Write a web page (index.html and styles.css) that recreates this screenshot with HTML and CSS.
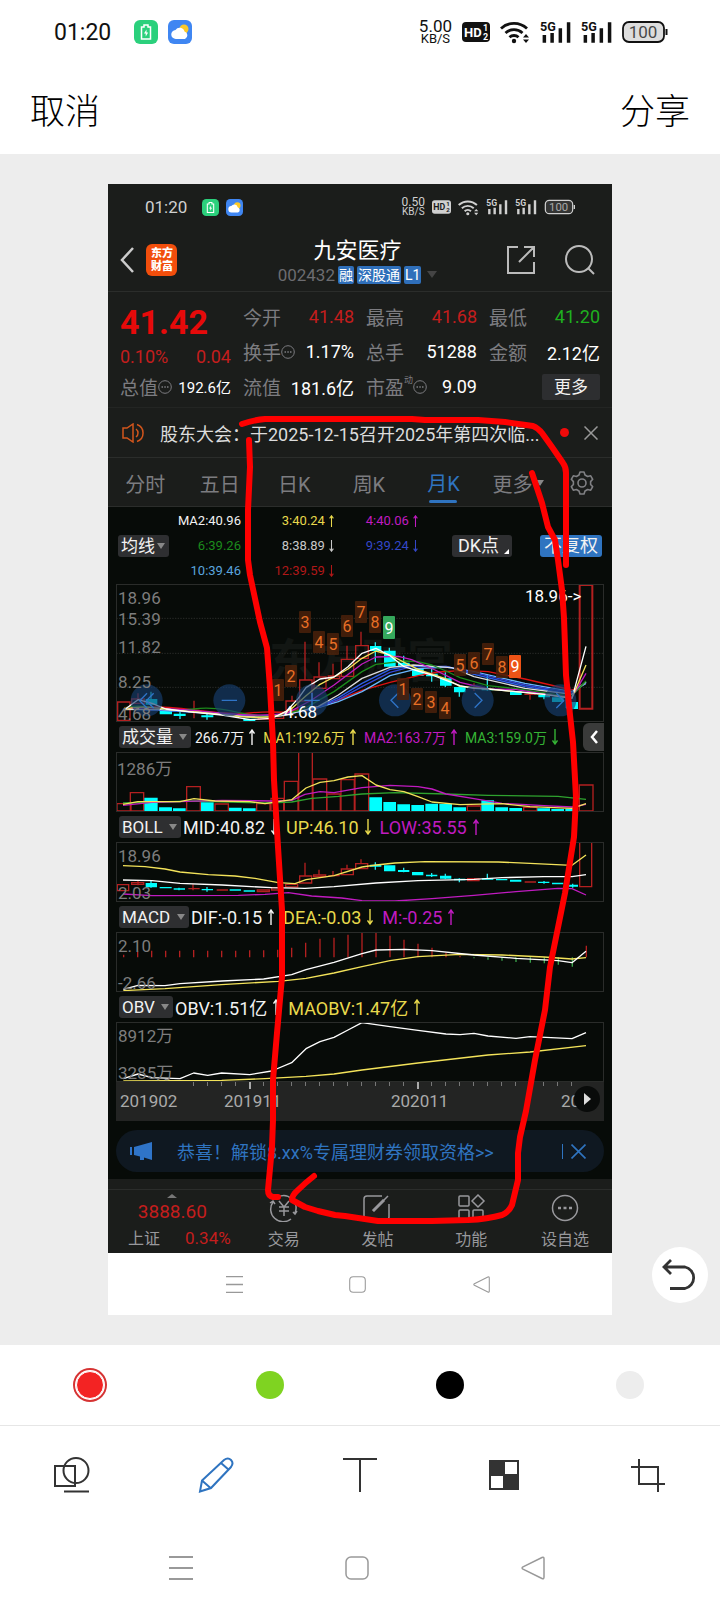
FILE: index.html
```html
<!DOCTYPE html>
<html lang="zh-CN">
<head>
    <meta charset="UTF-8">
    <meta name="viewport" content="width=device-width, initial-scale=1.0">
    <title>涂鸦</title>
    <link rel="stylesheet" href="styles.css">
</head>
<body>
    <!-- shared icons -->
    <svg class="sprite" aria-hidden="true">
        <symbol id="i-power" viewBox="0 0 24 24">
            <rect width="24" height="24" rx="6" fill="#2bd07c"/>
            <path d="M10 5h4v2h2.500v12h-9V7H10z" fill="none" stroke="#fff" stroke-width="1.500"/>
            <path d="M12.500 9.500l-2.500 4h1.700v3l2.500-4h-1.700z" fill="#fff"/>
        </symbol>
        <symbol id="i-weather" viewBox="0 0 24 24">
            <rect width="24" height="24" rx="6" fill="#3f86f2"/>
            <circle cx="16" cy="9" r="4.500" fill="#fbc928"/>
            <path d="M8 19a4.500 4.500 0 0 1-.5-9 5 5 0 0 1 9 1.500A4 4 0 0 1 17 19z" fill="#fff"/>
        </symbol>
        <symbol id="i-hd" viewBox="0 0 28 20">
            <rect width="28" height="20" rx="4" fill="currentColor"/>
            <g class="hd-text">
                <text x="2" y="15" font-size="13">HD</text>
                <text x="21" y="9" font-size="9">1</text>
                <text x="21" y="18" font-size="9">2</text>
            </g>
        </symbol>
        <symbol id="i-wifi" viewBox="0 0 30 24">
            <g fill="none" stroke="currentColor" stroke-width="2.800">
                <path d="M1 8.500a19 19 0 0 1 26 0"/>
                <path d="M5.500 13a12.500 12.500 0 0 1 17 0"/>
                <path d="M9.500 17.300a6.500 6.500 0 0 1 9 0"/>
            </g>
            <circle cx="14" cy="21" r="2.200" fill="currentColor"/>
            <path d="M23 17.500l3-3.500 3 3.500zM23 19.500h6l-3 3.500z" fill="currentColor"/>
        </symbol>
        <symbol id="i-5g" viewBox="0 0 32 24">
            <text x="0" y="11" font-size="13" font-weight="700" fill="currentColor">5G</text>
            <path d="M4.500 23v-8M12.500 23v-10M21 23V8M29.500 23V2" stroke="currentColor" stroke-width="3.600"/>
        </symbol>
        <symbol id="i-battery" viewBox="0 0 46 24">
            <rect x="1" y="2" width="41" height="20" rx="6" fill="currentColor" fill-opacity=".14" stroke="currentColor" stroke-width="1.800"/>
            <path d="M44.500 9v6" stroke="currentColor" stroke-width="2"/>
            <text x="21" y="18" font-size="17" text-anchor="middle" fill="currentColor" opacity=".75">100</text>
        </symbol>
        <symbol id="i-menu" viewBox="0 0 24 24">
            <path d="M0 1h24M0 12h24M0 23h24" stroke="currentColor" stroke-width="1.800"/>
        </symbol>
        <symbol id="i-home" viewBox="0 0 24 24">
            <rect x="1" y="1" width="22" height="22" rx="5" fill="none" stroke="currentColor" stroke-width="1.500"/>
        </symbol>
        <symbol id="i-back" viewBox="0 0 24 24">
            <path d="M21 1.500Q23 .5 23 3v18q0 2.500-2 1.500L2 13.200q-1.800-1.200 0-2.400z" fill="none" stroke="currentColor" stroke-width="1.500"/>
        </symbol>
        <symbol id="i-up" viewBox="0 0 6 16">
            <path d="M3 16V1M.500 4.500L3 1l2.500 3.500" fill="none" stroke="currentColor" stroke-width="1.400"/>
        </symbol>
        <symbol id="i-down" viewBox="0 0 6 16">
            <path d="M3 0v15M.500 11.500L3 15l2.500-3.500" fill="none" stroke="currentColor" stroke-width="1.400"/>
        </symbol>
        <symbol id="i-close" viewBox="0 0 14 14">
            <path d="M.500.500l13 13M13.500.500l-13 13" stroke="currentColor" stroke-width="1.500"/>
        </symbol>
        <symbol id="i-info" viewBox="0 0 14 14">
            <circle cx="7" cy="7" r="6.300" fill="none" stroke="currentColor"/>
            <path d="M3.500 7h1.500M6.300 7h1.500M9 7h1.500" stroke="currentColor" stroke-width="1.500"/>
        </symbol>
    </svg>

    <header class="top">
        <div class="status">
            <time>01:20</time>
            <svg class="app"><use href="#i-power"/></svg>
            <svg class="app"><use href="#i-weather"/></svg>
            <div class="speed"><b>5.00</b><span>KB/S</span></div>
            <svg class="hd"><use href="#i-hd"/></svg>
            <svg class="wifi"><use href="#i-wifi"/></svg>
            <svg class="sim"><use href="#i-5g"/></svg>
            <svg class="sim"><use href="#i-5g"/></svg>
            <svg class="battery"><use href="#i-battery"/></svg>
        </div>
        <div class="actions">
            <button type="button">取消</button>
            <button type="button">分享</button>
        </div>
    </header>

    <main class="stage">
        <div class="shot">
            <div class="status status-small">
                <time>01:20</time>
                <svg class="app"><use href="#i-power"/></svg>
                <svg class="app"><use href="#i-weather"/></svg>
                <div class="speed"><b>0.50</b><span>KB/S</span></div>
                <svg class="hd"><use href="#i-hd"/></svg>
                <svg class="wifi"><use href="#i-wifi"/></svg>
                <svg class="sim"><use href="#i-5g"/></svg>
                <svg class="sim"><use href="#i-5g"/></svg>
                <svg class="battery"><use href="#i-battery"/></svg>
            </div>

            <div class="stock-head">
                <div class="side">
                    <button type="button" aria-label="返回">
                        <svg width="14" height="26" viewBox="0 0 14 26"><path d="M13 1L2 13l11 12" fill="none" stroke="#ccc" stroke-width="2.500"/></svg>
                    </button>
                    <span class="logo">东方<br>财富</span>
                </div>
                <div class="stock">
                    <h1>九安医疗</h1>
                    <div class="code">
                        <span>002432</span>
                        <i>融</i><i>深股通</i><i>L1</i>
                        <svg width="10" height="7" viewBox="0 0 10 7"><path d="M0 0h10L5 7z" fill="#444"/></svg>
                    </div>
                </div>
                <div class="side side-right">
                    <button type="button" aria-label="分享">
                        <svg width="28" height="28" viewBox="0 0 28 28" fill="none" stroke="#bbb" stroke-width="2"><path d="M11 1H1v26h26V16M12 16L26 2M17 1h10v10"/></svg>
                    </button>
                    <button type="button" aria-label="搜索">
                        <svg width="30" height="30" viewBox="0 0 30 30" fill="none" stroke="#bbb" stroke-width="2"><circle cx="14" cy="14" r="13"/><path d="M23 23l6 6"/></svg>
                    </button>
                </div>
            </div>

            <section class="quote">
                <div class="last">
                    <strong>41.42</strong>
                    <p class="change"><span>0.10%</span><span>0.04</span></p>
                    <p class="cell total"><span>总值<svg class="info"><use href="#i-info"/></svg></span><b>192.6亿</b></p>
                </div>
                <p class="cell"><span>今开</span><b class="up">41.48</b></p>
                <p class="cell"><span>最高</span><b class="up">41.68</b></p>
                <p class="cell"><span>最低</span><b class="down">41.20</b></p>
                <p class="cell"><span>换手<svg class="info"><use href="#i-info"/></svg></span><b>1.17%</b></p>
                <p class="cell"><span>总手</span><b>51288</b></p>
                <p class="cell"><span>金额</span><b>2.12亿</b></p>
                <p class="cell"><span>流值</span><b>181.6亿</b></p>
                <p class="cell"><span>市盈<sup>动</sup><svg class="info"><use href="#i-info"/></svg></span><b>9.09</b></p>
                <button type="button" class="more">更多</button>
            </section>

            <div class="notice">
                <svg width="24" height="20" viewBox="0 0 24 20" fill="none" stroke="#d2551c" stroke-width="1.500"><path d="M1 5h4l6-4v18l-6-4H1zM14 6a5 5 0 0 1 0 8M15 1.500a9 9 0 0 1 0 17"/></svg>
                <p>股东大会：于2025-12-15召开2025年第四次临...</p>
                <span class="dot"></span>
                <button type="button" aria-label="关闭"><svg width="14" height="14"><use href="#i-close"/></svg></button>
            </div>

            <nav class="tabs">
                <button type="button">分时</button>
                <button type="button">五日</button>
                <button type="button">日K</button>
                <button type="button">周K</button>
                <button type="button" class="active">月K</button>
                <button type="button" class="drop">更多</button>
                <button type="button" class="gear" aria-label="设置">
                    <svg width="26" height="26" viewBox="0 0 26 26" fill="none" stroke="#808084" stroke-width="1.600" stroke-linejoin="round"><path d="M11 2h4l1 3 2.600 1.500 3.100-.7 2 3.500-2.100 2.300v2.800l2.100 2.300-2 3.500-3.100-.7L16 21l-1 3h-4l-1-3-2.600-1.500-3.100.7-2-3.500 2.100-2.300v-2.800L2.300 9.300l2-3.500 3.100.7L10 5z"/><circle cx="13" cy="13" r="4"/></svg>
                </button>
            </nav>

            <div class="charts">
                <div class="averages">
                    <label class="picker"><select aria-label="均线"><option>均线</option></select></label>
                    <ul>
                        <li>MA2:40.96</li>
                        <li class="yellow">3:40.24<svg><use href="#i-up"/></svg></li>
                        <li class="purple">4:40.06<svg><use href="#i-up"/></svg></li>
                        <li class="green">6:39.26</li>
                        <li class="grey">8:38.89<svg><use href="#i-down"/></svg></li>
                        <li class="blue">9:39.24<svg><use href="#i-down"/></svg></li>
                        <li class="sky">10:39.46</li>
                        <li class="red">12:39.59<svg><use href="#i-down"/></svg></li>
                    </ul>
                    <button type="button" class="dk">DK点</button>
                    <button type="button" class="adjust">不复权</button>
                </div>

                <!-- monthly candles -->
                <svg class="chart" viewBox="0 0 488 138">
                    <text class="mark" x="153" y="93">东方财富</text>
                    <svg width="488" height="138" viewBox="33 27 1464 414">
                        <path class="grid" d="M34 130H1497M34 235H1497M34 337H1497"/>
                        <g class="candle-up">
                            <path d="M38 381h37v55H38zM80 372h38v13H80zM99 355v17M267 377v53M250 411h34M335 415h34M460 422h36v10h-36zM502 412h34v18h-34zM543 378h36v27h-36zM561 362v16M584 315h37v63h-37zM600 200v115M627 306h36v34h-36zM642 262v44M670 303h34v8h-34zM684 266v37M709 253h37v51h-37zM726 212v41M752 212h38v38h-38zM768 170v42M1107 325v23M1090 338h34M1258 358h34M1275 352v22"/>
                            <path class="last-candle" d="M1424 30h38v371h-38z"/>
                        </g>
                        <g class="candle-down">
                            <path d="M138 350v45M225 410v22M306 412v22M811 202v60M853 218v56M896 242v30M980 280v40M1021 292v44M1063 330v35M1147 297v50M1317 355v18"/>
                            <path class="body" d="M122 372h35v17h-35zM164 405h37v13h-37zM206 416h36v7h-36zM289 421h36v6h-36zM374 414h36v4h-36zM415 431h36v9h-36zM795 213h34v15h-34zM837 227h35v48h-35zM879 263h35v9h-35zM921 281h35v22h-35zM963 296h35v8h-35zM1005 310h35v22h-35zM1047 336h35v16h-35zM1130 342h35v4h-35zM1215 349h35v11h-35zM1300 360h35v7h-35zM1341 367h35v14h-35zM1384 381h35v21h-35z"/>
                        </g>
                        <g class="lines">
                            <path stroke="#d11" d="M57 398Q150 390 267 405T435 414 545 412L620 402 687 380 771 346 855 322 940 302 1000 291 1080 286 1149 290 1260 312 1401 345 1443 325"/>
                            <path stroke="#6ab7ff" d="M57 402Q200 405 351 416T545 418L640 398 700 380 771 350 855 302 939 281 1023 276 1107 290 1260 325 1401 350 1443 325"/>
                            <path stroke="#3447d8" d="M57 403Q200 402 351 415T545 418L640 397 700 374 771 335 855 292 920 275 1023 274 1107 293 1260 330 1401 353 1443 322"/>
                            <path stroke="#2f5fe8" d="M57 401Q200 406 351 417T560 415L640 396 700 368 771 325 855 283 925 272 1040 278 1107 298 1260 335 1401 357 1443 320"/>
                            <path stroke="#ddd" d="M57 404Q200 400 351 418T560 415L640 394 700 360 771 310 855 277 925 270 1040 278 1107 305 1260 340 1401 358 1443 320"/>
                            <path stroke="#1c8a1c" d="M57 400C110 380 180 415 267 402S420 428 500 424L590 405 687 350 771 290 813 268 900 258 939 260 981 270 1023 288 1065 308 1149 332 1233 341 1350 358 1401 362 1443 318"/>
                            <path stroke="#c01bc0" d="M57 402C110 395 200 400 300 410S470 425 545 415L620 375 687 330 771 267 813 246 880 244 920 254 990 285 1065 322 1149 342 1233 344 1350 362 1401 366 1443 295"/>
                            <path stroke="#f3e35a" d="M57 405C110 385 180 405 267 411S440 436 520 422L561 400 603 362 645 328 687 306 729 282 771 250 813 228 855 240 939 283 1023 312 1065 334 1149 342 1317 358 1401 368 1443 270"/>
                            <path stroke="#fff" d="M57 405L99 374 141 385 183 402 267 412 351 420 435 434 500 430 545 408 580 370 603 338 645 312 687 306 729 275 771 235 813 220 855 242 897 275 939 288 981 300 1023 316 1065 332 1107 340 1150 342 1233 350 1317 358 1401 370 1443 214"/>
                        </g>
                        <g class="pads">
                            <circle cx="125" cy="376" r="48"/><circle cx="373" cy="376" r="48"/><circle cx="621" cy="376" r="48"/>
                            <circle cx="870" cy="376" r="48"/><circle cx="1118" cy="376" r="48"/><circle cx="1366" cy="376" r="48"/>
                            <path d="M126 355l-22 22 22 22M146 355l-22 22 22 22M350 376h46M598 376h46M621 353v46M880 354l-22 22 22 22M1109 354l22 22-22 22M1354 355l22 22-22 22M1384 355v44"/>
                        </g>
                    </svg>
                    <rect class="frame" x=".5" y=".5" width="487" height="137"/>
                    <g class="scale">
                        <text x="2" y="20">18.96</text>
                        <text x="2" y="41">15.39</text>
                        <text x="2" y="69">11.82</text>
                        <text x="2" y="104">8.25</text>
                        <text x="2" y="136">4.68</text>
                    </g>
                    <g class="tags">
                        <rect x="156" y="95" width="12" height="22" rx="1"/><rect x="169" y="81" width="12" height="22" rx="1"/>
                        <rect x="183" y="27" width="12" height="22" rx="1"/><rect x="197" y="47" width="12" height="22" rx="1"/>
                        <rect x="211" y="49" width="12" height="22" rx="1"/><rect x="225" y="31" width="12" height="22" rx="1"/>
                        <rect x="239" y="17" width="12" height="22" rx="1"/><rect x="253" y="27" width="12" height="22" rx="1"/>
                        <rect class="tag-green" x="267" y="32" width="12" height="23" rx="1"/>
                        <rect x="281" y="94" width="12" height="22" rx="1"/><rect x="295" y="104" width="12" height="22" rx="1"/>
                        <rect x="309" y="107" width="12" height="22" rx="1"/><rect x="323" y="113" width="12" height="22" rx="1"/>
                        <rect x="338" y="70" width="12" height="22" rx="1"/><rect x="352" y="68" width="12" height="22" rx="1"/>
                        <rect x="366" y="59" width="12" height="22" rx="1"/><rect x="380" y="72" width="12" height="22" rx="1"/>
                        <rect class="tag-hot" x="393" y="71" width="12" height="23" rx="1"/>
                        <text x="162" y="112">1</text><text x="175" y="98">2</text><text x="189" y="44">3</text>
                        <text x="203" y="64">4</text><text x="217" y="66">5</text><text x="231" y="48">6</text>
                        <text x="245" y="34">7</text><text x="259" y="44">8</text><text class="on" x="273" y="50">9</text>
                        <text x="287" y="111">1</text><text x="301" y="121">2</text><text x="315" y="124">3</text>
                        <text x="329" y="130">4</text><text x="344" y="87">5</text><text x="358" y="85">6</text>
                        <text x="372" y="76">7</text><text x="386" y="89">8</text><text class="on" x="399" y="88">9</text>
                    </g>
                    <g class="extreme">
                        <text x="409" y="18">18.96-&gt;</text>
                        <text x="168" y="134">4.68</text>
                    </g>
                </svg>

                <div class="legend legend-tight">
                    <label class="picker"><select aria-label="成交量"><option>成交量</option></select></label>
                    <span>266.7万<svg><use href="#i-up"/></svg></span>
                    <span class="yellow">MA1:192.6万<svg><use href="#i-up"/></svg></span>
                    <span class="purple">MA2:163.7万<svg><use href="#i-up"/></svg></span>
                    <span class="lime">MA3:159.0万<svg><use href="#i-down"/></svg></span>
                    <button type="button" class="fold" aria-label="收起">
                        <svg width="8" height="14" viewBox="0 0 8 14"><path d="M7 1L2 7l5 6" fill="none" stroke="#fff" stroke-width="2.500"/></svg>
                    </button>
                </div>
                <svg class="chart" viewBox="0 0 488 60">
                    <text class="scale" x="1" y="23">1286万</text>
                    <svg width="488" height="60" viewBox="33 65 1464 180">
                        <path class="candle-up" d="M36 242v-22h42v22zM76 242v-55h40v55zM245 242v-73h41v73zM330 242v-21h40v21zM455 242v-22h40v22zM498 242v-38h38v38zM538 242v-89h41v89zM581 242V60h41v182zM624 242v-96h41v96zM666 242v-51h40v51zM708 242v-94h40v94zM750 242V131h41v111zM1087 242v-15h40v15zM1256 242v-11h40v11zM1423 242v-78h41v78z"/>
                        <path class="body" d="M118 202h40v40h-40zM162 231h39v11h-39zM204 234h38v8h-38zM288 216h38v26h-38zM372 232h38v10h-38zM414 234h38v8h-38zM793 201h38v41h-38zM835 215h38v27h-38zM877 222h38v20h-38zM919 224h38v18h-38zM961 220h38v22h-38zM1003 221h38v21h-38zM1045 231h38v11h-38zM1129 210h38v32h-38zM1171 231h38v11h-38zM1213 233h38v9h-38zM1297 234h38v8h-38zM1339 236h38v6h-38zM1381 235h38v7h-38z"/>
                        <g class="lines">
                            <path stroke="#2fa32f" d="M54 218L267 212 480 218 560 215 620 204 700 198 771 191 870 187 1023 191 1149 195 1359 198 1443 207"/>
                            <path stroke="#c01bc0" d="M54 225L141 216 351 210 500 212 560 210 600 192 645 184 687 187 771 172 855 165 939 169 981 176 1023 191 1107 205 1191 219 1317 226 1401 230 1443 222"/>
                            <path stroke="#f3e35a" d="M54 222L99 214 225 214 267 205 330 212 435 214 480 220 560 208 603 173 645 156 687 151 729 140 771 136 813 164 855 178 897 184 939 199 981 215 1065 223 1191 220 1275 229 1401 234 1443 220"/>
                        </g>
                    </svg>
                    <rect class="frame" x=".5" y=".5" width="487" height="59"/>
                </svg>

                <div class="legend">
                    <label class="picker"><select aria-label="BOLL"><option>BOLL</option></select></label>
                    <span>MID:40.82<svg><use href="#i-down"/></svg></span>
                    <span class="yellow">UP:46.10<svg><use href="#i-down"/></svg></span>
                    <span class="purple">LOW:35.55<svg><use href="#i-up"/></svg></span>
                </div>
                <svg class="chart" viewBox="0 0 488 60">
                    <svg width="488" height="60" viewBox="33 335 1464 180">
                        <path class="candle-up" d="M37 463h34v18H37zM80 457h36v5H80zM99 450v15M250 475h34M264 462v18M335 479h34M457 479h36v5h-36zM500 472h34v7h-34zM542 462h36v8h-36zM584 437h36v21h-36zM600 397v40M626 434h36v5h-36zM642 418v16M670 436h34M684 422v14M709 416h36v17h-36zM726 403v13M752 400h36v15h-36zM768 387v13M1088 445h34v6h-34zM1259 455h34M1424 330h36v139h-36z"/>
                        <path class="candle-down" d="M138 452v20M222 472v8M306 470v14M811 396v22M896 412v14M980 428v12M1021 430v16M1063 444v12M1147 430v16M1317 452v8M1403 460v12"/>
                        <path class="body" d="M122 458h34v13h-34zM164 470h36v4h-36zM206 474h34v4h-34zM290 476h34v4h-34zM374 477h34v4h-34zM416 480h34v4h-34zM795 403h34v6h-34zM837 405h34v18h-34zM879 419h34v6h-34zM921 425h34v10h-34zM963 433h34v5h-34zM1005 436h34v9h-34zM1047 445h34v5h-34zM1131 444h34v4h-34zM1173 446h34v4h-34zM1215 448h34v6h-34zM1299 454h34v4h-34zM1341 457h34v5h-34zM1385 463h34v6h-34z"/>
                        <g class="lines">
                            <path stroke="#f3e35a" d="M54 406L120 409 180 416 225 425 310 433 390 437 450 444 520 457 570 460 603 448 687 436 771 410 813 404 870 398 960 394 1180 395 1275 399 1401 405 1443 374"/>
                            <path stroke="#fff" d="M54 449L141 451 225 459 351 464 500 472 600 474 687 469 813 458 939 451 1107 447 1191 442 1317 439 1401 439 1443 433"/>
                            <path stroke="#c01bc0" d="M54 491L141 496 400 495 480 492 550 487 620 497 710 503 771 511 870 512 981 505 1107 495 1233 484 1359 474 1401 475 1443 494"/>
                        </g>
                    </svg>
                    <rect class="frame" x=".5" y=".5" width="487" height="59"/>
                    <g class="scale"><text x="2" y="20">18.96</text><text x="2" y="57">2.03</text></g>
                </svg>

                <div class="legend">
                    <label class="picker"><select aria-label="MACD"><option>MACD</option></select></label>
                    <span>DIF:-0.15<svg><use href="#i-up"/></svg></span>
                    <span class="yellow">DEA:-0.03<svg><use href="#i-down"/></svg></span>
                    <span class="purple">M:-0.25<svg><use href="#i-up"/></svg></span>
                </div>
                <svg class="chart" viewBox="0 0 488 60">
                    <svg width="488" height="60" viewBox="33 94 1464 180">
                        <path class="candle-up" d="M56 170v-8M98 170v-18M140 170v-20M182 170v-20M224 170v-20M266 170v-22M308 170v-20M350 170v-20M392 170v-20M434 170v-21M476 170v-21M518 170v-23M560 170v-29M602 170v-44M645 170v-56M687 170v-59M729 170v-68M771 170V94M813 170V94M855 170v-65M897 170v-53M939 170v-41M981 170v-29M1023 170v-14M1065 170v-4M1444 170v-35"/>
                        <path class="sticks-down" d="M1107 170v3M1149 170v7M1191 170v10M1233 170v14M1276 170v16M1318 170v18M1360 170v22M1402 170v28"/>
                        <g class="lines">
                            <path stroke="#f3e35a" d="M55 270L180 264 350 252 520 242 603 233 687 217 771 198 855 180 939 168 1065 161 1191 163 1317 169 1401 175 1443 171"/>
                            <path stroke="#fff" d="M55 266L99 254 180 255 225 249 351 241 476 235 560 222 603 207 687 185 771 159 813 148 900 146 981 150 1107 163 1233 173 1359 180 1401 186 1443 152"/>
                        </g>
                    </svg>
                    <rect class="frame" x=".5" y=".5" width="487" height="59"/>
                    <g class="scale"><text x="2" y="20">2.10</text><text x="2" y="57">-2.66</text></g>
                </svg>

                <div class="legend">
                    <label class="picker"><select aria-label="OBV"><option>OBV</option></select></label>
                    <span>OBV:1.51亿<svg><use href="#i-up"/></svg></span>
                    <span class="yellow">MAOBV:1.47亿<svg><use href="#i-up"/></svg></span>
                </div>
                <svg class="chart" viewBox="0 0 488 60">
                    <svg width="488" height="60" viewBox="33 363 1464 180">
                        <g class="lines">
                            <path stroke="#f3e35a" d="M55 540L350 538 480 533 603 526 687 519 771 507 939 486 1149 462 1275 453 1443 434"/>
                            <path stroke="#fff" d="M55 533L99 519 141 530 225 533 266 516 308 523 350 516 434 521 500 510 560 485 603 443 645 422 687 409 729 387 771 365 855 377 939 388 1023 399 1065 401 1107 397 1149 405 1233 412 1275 407 1401 413 1443 395"/>
                        </g>
                    </svg>
                    <rect class="frame" x=".5" y=".5" width="487" height="59"/>
                    <g class="scale"><text x="2" y="20">8912万</text><text x="2" y="57">3285万</text></g>
                </svg>

                <svg class="chart axis" viewBox="0 0 488 39">
                    <path d="M77 2h379" stroke="#777" stroke-width="4" stroke-dasharray="1 13"/>
                    <path d="M134 0v7M302 0v7" stroke="#aaa" stroke-width="2"/>
                    <g class="dates">
                        <text x="4" y="25">201902</text><text x="108" y="25">201911</text><text x="275" y="25">202011</text><text x="445" y="25">20</text>
                    </g>
                    <circle cx="471" cy="17" r="13" fill="#090b0a"/>
                    <path d="M468 11l7 6-7 6z" fill="#ddd"/>
                </svg>

                <div class="promo">
                    <svg width="22" height="18" viewBox="0 0 22 18" fill="#2f74c8"><path d="M0 5h2v8H0zM4 5l18-5v18l-8-2.500V18h-4v-3.500L4 13z"/></svg>
                    <a href="#">恭喜！解锁8.xx%专属理财券领取资格&gt;&gt;</a>
                    <button type="button" aria-label="关闭"><svg width="15" height="15"><use href="#i-close"/></svg></button>
                </div>
            </div>

            <nav class="dock">
                <a href="#" class="index">
                    <svg width="10" height="4" viewBox="0 0 10 4"><path d="M0 4l5-4 5 4z" fill="#777"/></svg>
                    <b>3888.60</b>
                    <span>上证<em>0.34%</em></span>
                </a>
                <a href="#">
                    <svg width="30" height="28" viewBox="0 0 30 28"><path d="M9 3a12.500 12.500 0 0 1 17 16M22 25A12.500 12.500 0 0 1 4 8M1 9l3-2 2 3M28 17l-2 3-2-2M10 7l5 6 5-6M15 13v9M10 13h10M10 17h10"/></svg>
                    交易
                </a>
                <a href="#">
                    <svg width="30" height="28" viewBox="0 0 30 28"><path d="M20 2H5Q2 2 2 5v18q0 3 3 3h19q3 0 3-3V10M11 17L26 2"/><path d="M11 17l11-11" stroke-width="3"/></svg>
                    发帖
                </a>
                <a href="#">
                    <svg width="30" height="28" viewBox="0 0 30 28"><rect x="3" y="2" width="10" height="10" rx="1"/><rect x="3" y="16" width="10" height="10" rx="1"/><rect x="17" y="16" width="10" height="10" rx="1"/><path d="M22 1l6 6-6 6-6-6z"/></svg>
                    功能
                </a>
                <a href="#">
                    <svg width="30" height="28" viewBox="0 0 30 28"><circle cx="15" cy="14" r="12.500"/><path d="M8 14h3M13.500 14h3M19 14h3" stroke-width="2.500"/></svg>
                    设自选
                </a>
            </nav>

            <div class="keys keys-small">
                <div>
                    <button type="button" aria-label="菜单"><svg><use href="#i-menu"/></svg></button>
                    <button type="button" aria-label="主页"><svg><use href="#i-home"/></svg></button>
                    <button type="button" aria-label="返回"><svg><use href="#i-back"/></svg></button>
                </div>
            </div>

            <!-- hand-drawn strokes over the shot -->
            <svg class="doodle" viewBox="0 0 504 1131" preserveAspectRatio="none">
                <path d="M134 240Q145 236 157 235H304L317 236H370L397 238 425 242Q430 244 434 249L444 263 455 279Q458 283 458 289V381"/>
                <path d="M424 289L434 319 440 343 447 356 450 376 454 406 456 434 458 491 462 531 465 558 468 613 466 653 457 709 442 783 437 826 427 876 418 927 412 953 410 969V996L404 1021Q401 1028 394 1031 380 1035 360 1036L324 1037H270L237 1032 227 1031 210 1027 197 1023 184 1016Q184 1011 190 1006 197 999 206 992"/>
                <path d="M141 256L142 283 140 326V376L142 391 152 438 159 464 162 504 165 558 166 596 170 663 174 726V793L169 849 165 896V936L164 963 160 1006Q160 1012 165 1013H170"/>
            </svg>
        </div>

        <button type="button" class="undo" aria-label="撤销">
            <svg width="36" height="32" viewBox="0 0 36 32" fill="none" stroke="#333" stroke-width="2.800"><path d="M9 1L2 8l7 7M2 8h21a11 11 0 0 1 0 21.500H8"/></svg>
        </button>
    </main>

    <footer>
        <div class="palette">
            <label><input type="radio" name="color" class="c-red" aria-label="红色" checked></label>
            <label><input type="radio" name="color" class="c-green" aria-label="绿色"></label>
            <label><input type="radio" name="color" class="c-black" aria-label="黑色"></label>
            <label><input type="radio" name="color" class="c-grey" aria-label="灰色"></label>
        </div>
        <div class="tools">
            <button type="button" aria-label="形状">
                <svg viewBox="0 0 36 36"><rect x="1" y="9" width="20" height="20"/><circle cx="22" cy="13.500" r="12.500"/><path d="M10 34.500h25"/></svg>
            </button>
            <button type="button" class="active" aria-label="画笔">
                <svg viewBox="0 0 36 36"><path d="M2 34.500l2-11L26 3q4-3 7 0t0 7L13 31zM4 23.500l8.500 7.500M23 6l8 7"/></svg>
            </button>
            <button type="button" aria-label="文字">
                <svg viewBox="0 0 36 36"><path d="M1 2h34M18 2v33"/></svg>
            </button>
            <button type="button" aria-label="马赛克">
                <svg viewBox="0 0 36 36"><path d="M4 4h28v28H4z"/><path d="M4 4h14v14H4zM18 18h14v14H18z" fill="#333"/></svg>
            </button>
            <button type="button" aria-label="裁剪">
                <svg viewBox="0 0 36 36"><path d="M9 2v25h26M1 10h27v25"/></svg>
            </button>
        </div>
        <div class="keys">
            <div>
                <button type="button" aria-label="菜单"><svg><use href="#i-menu"/></svg></button>
                <button type="button" aria-label="主页"><svg><use href="#i-home"/></svg></button>
                <button type="button" aria-label="返回"><svg><use href="#i-back"/></svg></button>
            </div>
        </div>
    </footer>
</body>
</html>
```
FILE: styles.css
```css
:root {
    --dark: #1b1d1b;
    --ink: #070b08;
    --line: #2b2d2b;
    --muted: #7c7c80;
    --red: #c41d1d;
    --blue: #2f74c0;
    --yellow: #e8d94c;
    --purple: #c01bc0;
}

* {
    margin: 0;
    padding: 0;
    box-sizing: border-box;
}

body {
    background: #fff;
    color: #111;
    font-family: Roboto, "Noto Sans CJK SC", sans-serif;
    font-size: 18px;
}

button, select {
    font: inherit;
    color: inherit;
    background: none;
    border: 0;
}

a {
    color: inherit;
    text-decoration: none;
}

b, i, em {
    font-weight: 400;
    font-style: normal;
}

ul {
    list-style: none;
}

svg {
    display: block;
    flex: none;
}

.sprite {
    display: none;
}

/* status bar */
.status {
    --hd: #fff;
    display: flex;
    align-items: center;
    height: 64px;
    padding: 0 52px 0 54px;
    gap: 10px;
}

.status time {
    font-size: 23px;
    margin-right: 13px;
}

.app {
    width: 24px;
    height: 24px;
}

.speed {
    margin-left: auto;
    display: flex;
    flex-direction: column;
    align-items: center;
    font-size: 17px;
    line-height: 14px;
}

.speed span {
    font-size: 13px;
    line-height: 12px;
}

.hd {
    width: 28px;
    height: 20px;
}

.hd-text {
    fill: var(--hd);
    font-weight: 700;
}

.wifi {
    width: 30px;
    height: 24px;
}

.sim {
    width: 31px;
    height: 24px;
}

.battery {
    width: 46px;
    height: 24px;
}

.status-small {
    --hd: #1b1d1b;
    height: 46px;
    padding: 0 36px 0 37px;
    gap: 7px;
    color: #d0d0d0;
}

.status-small time {
    font-size: 17px;
    margin-right: 8px;
}

.status-small .app {
    width: 17px;
    height: 17px;
}

.status-small .speed,
.status-small .speed span {
    font-size: 10px;
    line-height: 9px;
}

.status-small .speed b {
    font-size: 12px;
}

.status-small .hd {
    width: 19px;
    height: 14px;
}

.status-small .wifi {
    width: 21px;
    height: 17px;
}

.status-small .sim {
    width: 22px;
    height: 16px;
}

.status-small .battery {
    width: 32px;
    height: 16px;
}

.actions {
    display: flex;
    justify-content: space-between;
    align-items: center;
    height: 90px;
    padding: 0 30px 2px;
    font-size: 35px;
    font-weight: 300;
    color: #000;
}

/* stage */
.stage {
    position: relative;
    background: #ededed;
    padding: 30px 0;
}

.shot {
    position: relative;
    width: 70%;
    margin: 0 auto;
    background: var(--dark);
    color: #f2f2f2;
}

.stock-head {
    display: flex;
    align-items: center;
    height: 62px;
    padding: 0 17px 2px 12px;
    border-bottom: 1px solid var(--line);
}

.side {
    flex: 1;
    display: flex;
    align-items: center;
    gap: 12px;
}

.side-right {
    justify-content: flex-end;
    gap: 30px;
}

.logo {
    background: #f24e0c;
    border-radius: 6px;
    padding: 3px 4px 3px 5px;
    font-size: 11px;
    line-height: 13px;
    font-weight: 900;
    color: #fff;
}

.stock {
    text-align: center;
}

.stock h1 {
    font-size: 22px;
    line-height: 30px;
    font-weight: 400;
    color: #fff;
}

.code {
    display: flex;
    align-items: center;
    gap: 3px;
    font-size: 17px;
    line-height: 18px;
    color: #6c6c70;
}

.code i {
    background: #2f6fba;
    border-radius: 2px;
    padding: 0 1px;
    font-size: 14px;
    color: #fff;
}

.code svg {
    margin-left: 3px;
}

/* quote */
.quote {
    display: grid;
    grid-template-columns: repeat(4, 1fr);
    grid-template-rows: repeat(3, 35px);
    column-gap: 12px;
    padding: 7px 12px 3px;
    border-bottom: 1px solid #232523;
}

.last {
    grid-row: span 3;
}

.last strong {
    display: block;
    font-size: 34px;
    line-height: 46px;
    color: #e60a0a;
}

.change {
    display: flex;
    justify-content: space-between;
    line-height: 24px;
    color: var(--red);
}

.cell {
    display: flex;
    justify-content: space-between;
    align-items: center;
    white-space: nowrap;
    height: 35px;
}

.cell span {
    display: flex;
    align-items: center;
    color: var(--muted);
    font-size: 19px;
}

.cell b {
    color: #fff;
}

.total b {
    font-size: 15px;
}

.cell .up {
    color: var(--red);
}

.cell .down {
    color: #1fb01f;
}

.cell sup {
    font-size: 9px;
    align-self: flex-start;
}

.info {
    width: 14px;
    height: 14px;
}

.more {
    justify-self: end;
    align-self: center;
    width: 58px;
    height: 26px;
    background: #2d2e30;
    border-radius: 2px;
    font-size: 17px;
    line-height: 26px;
}

.notice {
    display: flex;
    align-items: center;
    height: 50px;
    padding: 0 14px;
    border-bottom: 1px solid var(--line);
}

.notice p {
    flex: 1;
    margin-left: 14px;
    white-space: nowrap;
    overflow: hidden;
    color: #dcdcdc;
}

.dot {
    width: 9px;
    height: 9px;
    margin-right: 15px;
    border-radius: 50%;
    background: #f00a0a;
}

.notice button {
    color: #999;
}

.tabs {
    display: flex;
    height: 49px;
    padding-right: 3px;
    border-bottom: 1px solid var(--line);
}

.tabs button {
    flex: 75;
    font-size: 20px;
    color: var(--muted);
    white-space: nowrap;
    border-top: 2px solid transparent;
    display: flex;
    flex-direction: column;
    align-items: center;
    justify-content: center;
}

.tabs .active {
    color: var(--blue);
    justify-content: flex-end;
    gap: 3px;
    padding-bottom: 3px;
}

.tabs .active::after {
    content: "";
    width: 28px;
    height: 3px;
    border-radius: 2px;
    background: var(--blue);
}

.tabs .drop {
    flex-direction: row;
    align-items: center;
    gap: 3px;
}

.tabs .drop::after,
.picker::after {
    content: "";
    border: 4px solid transparent;
    border-top: 6px solid #888;
    border-bottom: 0;
}

.tabs .gear {
    flex: 54;
}

/* charts */
.charts {
    background: var(--ink);
    padding: 0 8px 7px;
}

.averages {
    display: flex;
    align-items: center;
    height: 77px;
    padding: 0 2px;
}

.averages ul {
    flex: 1;
    display: grid;
    grid-template-columns: 72fr 93fr 84fr;
    margin-right: 34px;
    font-size: 13px;
    line-height: 25px;
}

.averages li {
    display: flex;
    justify-content: flex-end;
    align-items: center;
    gap: 4px;
    white-space: nowrap;
}

.averages li svg {
    width: 5px;
    height: 12px;
}

.picker {
    display: flex;
    align-items: center;
    gap: 2px;
    height: 22px;
    padding: 0 4px 0 3px;
    border-radius: 3px;
    background: #2e2f31;
}

.picker select {
    appearance: none;
    font-size: 17px;
    line-height: 22px;
}

.dk,
.adjust {
    height: 22px;
    border-radius: 3px;
    line-height: 22px;
    white-space: nowrap;
}

.dk {
    display: flex;
    align-items: flex-end;
    gap: 5px;
    padding: 0 3px 0 6px;
    margin-right: 28px;
    background: #2e2f31;
}

.dk::after {
    content: "";
    margin-bottom: 3px;
    border-left: 5px solid transparent;
    border-bottom: 5px solid #fff;
}

.adjust {
    width: 62px;
    background: var(--blue);
}

.yellow { color: var(--yellow); }
.purple { color: var(--purple); }
.green { color: #1c8a1c; }
.lime { color: #35b335; }
.grey { color: #c8c8c8; }
.blue { color: #3447c8; }
.sky { color: #5aa5de; }
.red { color: #b01818; }

.chart {
    width: 100%;
    height: auto;
}

.frame {
    fill: none;
    stroke: #2a2c2a;
}

.grid {
    fill: none;
    stroke: #2a2c2a;
    stroke-width: 3;
    stroke-dasharray: 4 4;
}

.mark {
    font-size: 46px;
    font-weight: 700;
    fill: #121613;
}

.candle-up {
    fill: none;
    stroke: #b32020;
    stroke-width: 4;
}

.last-candle {
    stroke-width: 6;
}

.candle-down {
    fill: none;
    stroke: #22e6ee;
    stroke-width: 4;
}

.body {
    fill: #0ff;
    stroke: none;
}

.sticks-down {
    stroke: #3aa34a;
    stroke-width: 4;
}

.lines {
    fill: none;
    stroke-width: 4;
    stroke-linejoin: round;
}

.pads circle {
    fill: #173f70;
    opacity: .65;
}

.pads path {
    fill: none;
    stroke: #2f74c8;
    stroke-width: 4;
}

.scale {
    font-size: 17px;
    fill: #7d7d7d;
}

.tags rect {
    fill: #4a210a;
    opacity: .85;
}

.tags .tag-green {
    fill: #35a85c;
    opacity: 1;
}

.tags .tag-hot {
    fill: #ee5316;
    opacity: 1;
}

.tags text {
    font-size: 16px;
    text-anchor: middle;
    fill: #e87026;
}

.tags .on {
    fill: #fff;
}

.extreme {
    font-size: 17px;
    fill: #fff;
}

.legend {
    display: flex;
    align-items: center;
    gap: 9px;
    height: 30px;
    padding-left: 3px;
    white-space: nowrap;
}

.legend span {
    display: flex;
    align-items: center;
    gap: 6px;
}

.legend span svg {
    width: 6px;
    height: 16px;
}

.legend .picker {
    gap: 6px;
    margin-right: -7px;
}

.legend-tight {
    gap: 8px;
    font-size: 14px;
}

.legend-tight .picker {
    margin-right: -4px;
}

.legend-tight span {
    gap: 5px;
}

.fold {
    display: flex;
    align-items: center;
    margin-left: auto;
    padding: 0 6px 0 7px;
    height: 28px;
    background: #3a3b3a;
    border-radius: 6px 0 0 6px;
}

.axis {
    background: #232423;
}

.dates {
    font-size: 17px;
    fill: #aaa;
}

.promo {
    display: flex;
    align-items: center;
    height: 42px;
    margin-top: 9px;
    padding: 0 18px 0 14px;
    border-radius: 21px;
    background: #0f1821;
    color: #2f74c0;
}

.promo a {
    margin: 0 auto 0 25px;
    white-space: nowrap;
}

.promo button {
    border-left: 1px solid #2f74c0;
    padding-left: 8px;
}

/* dock */
.dock {
    display: grid;
    grid-template-columns: 129fr 94fr 94fr 94fr 94fr;
    height: 74px;
    border-top: 10px solid var(--dark);
    box-shadow: inset 0 1px var(--line);
    font-size: 16px;
    color: #98989c;
}

.dock a {
    display: flex;
    flex-direction: column;
    align-items: center;
    gap: 6px;
    padding-top: 5px;
    line-height: 24px;
}

.dock a > svg {
    fill: none;
    stroke: #98989c;
    stroke-width: 1.5;
}

.dock .index {
    gap: 0;
}

.dock .index > svg {
    stroke: none;
}

.index b {
    font-size: 19px;
    line-height: 28px;
    color: var(--red);
}

.index span {
    margin-left: 14px;
}

.index em {
    margin-left: 25px;
    font-size: 17px;
    color: var(--red);
}

/* system keys */
.keys {
    display: flex;
    justify-content: center;
    align-items: center;
    height: 88px;
    padding-right: 6px;
    color: #999;
}

.keys > div {
    width: 74%;
    display: grid;
    grid-template-columns: repeat(3, 1fr);
    justify-items: center;
}

.keys svg {
    width: 24px;
    height: 24px;
}

.keys-small {
    height: 62px;
    background: #fff;
    padding-right: 4px;
}

.keys-small svg {
    width: 17px;
    height: 17px;
}

.doodle {
    position: absolute;
    inset: 0;
    width: 100%;
    height: 100%;
    fill: none;
    stroke: #f00;
    stroke-width: 6;
    stroke-linecap: round;
    stroke-linejoin: round;
    pointer-events: none;
}

.undo {
    position: absolute;
    right: 12px;
    bottom: 42px;
    width: 56px;
    height: 56px;
    border-radius: 50%;
    background: #fff;
    display: flex;
    align-items: center;
    justify-content: center;
}

/* palette and tools */
.palette {
    display: grid;
    grid-template-columns: repeat(4, 1fr);
    place-items: center;
    height: 81px;
    border-bottom: 1px solid #e6e6e6;
}

.palette input {
    display: block;
    appearance: none;
    width: 28px;
    height: 28px;
    border-radius: 50%;
}

.palette input:checked {
    border: 1px solid #fff;
    box-shadow: 0 0 0 1px #fff, 0 0 0 3px #d63333;
}

.c-red { background: #f32323; }
.c-green { background: #7fd321; }
.c-black { background: #000; }
.c-grey { background: #ededed; }

.tools {
    display: grid;
    grid-template-columns: repeat(5, 1fr);
    place-items: center;
    height: 98px;
}

.tools svg {
    width: 36px;
    height: 36px;
    fill: none;
    stroke: #333;
    stroke-width: 2;
}

.tools .active svg {
    stroke: #2f74c0;
}
```
